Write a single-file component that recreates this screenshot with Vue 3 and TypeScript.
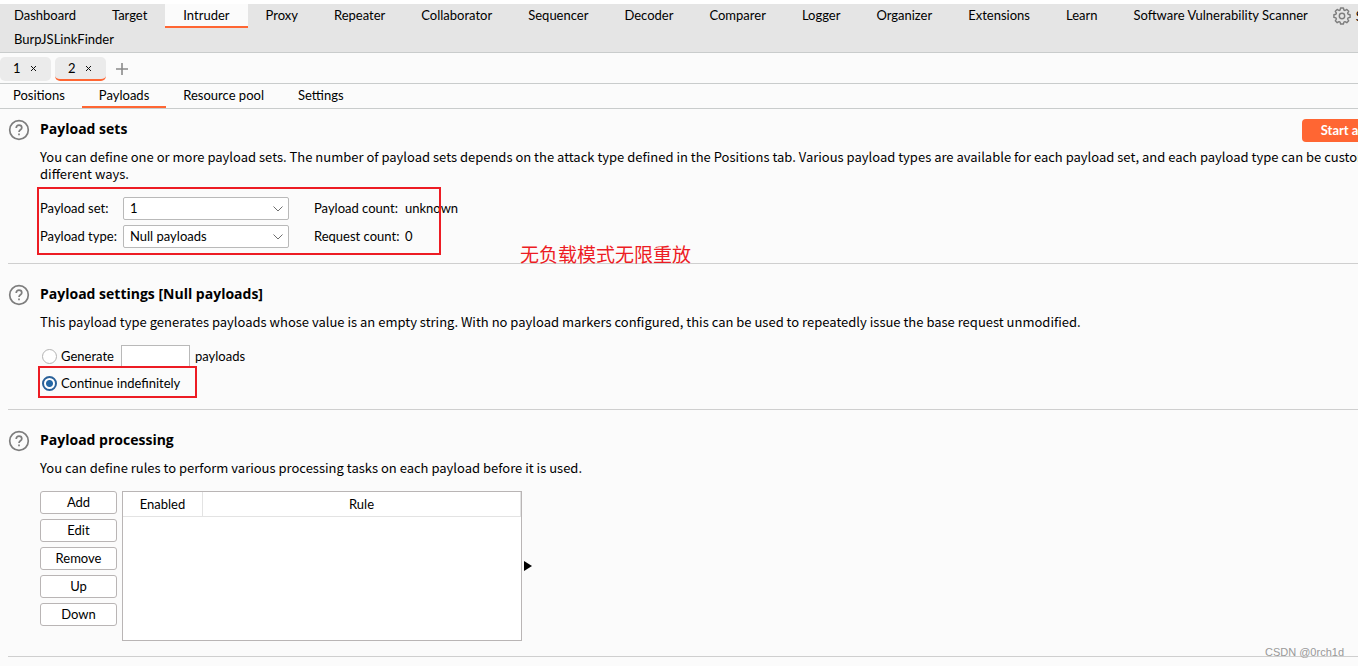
<script setup lang="ts">
import { ref } from 'vue'

const mainTabs: string[] = [
  'Dashboard', 'Target', 'Intruder', 'Proxy', 'Repeater', 'Collaborator', 'Sequencer',
  'Decoder', 'Comparer', 'Logger', 'Organizer', 'Extensions', 'Learn',
  'Software Vulnerability Scanner',
]
const attackTabs: number[] = [1, 2]
const views: string[] = ['Positions', 'Payloads', 'Resource pool', 'Settings']
const ruleActions: string[] = ['Add', 'Edit', 'Remove', 'Up', 'Down']

const activeMain = ref('Intruder')
const activeAttack = ref(2)
const activeView = ref('Payloads')
const payloadSet = ref('1')
const payloadType = ref('Null payloads')
const mode = ref('continue')
const amount = ref('')
</script>

<template>
  <div class="app">
    <header class="main-bar">
      <nav class="main-row">
        <button
          v-for="tab in mainTabs"
          :key="tab"
          type="button"
          class="main-tab"
          :class="{ active: tab === activeMain }"
          @click="activeMain = tab"
        >{{ tab }}</button>
        <button type="button" class="settings">
          <svg width="18" height="18" viewBox="0 0 18 18" fill="none" stroke="#7d7d7d" stroke-width="1.4" stroke-linejoin="round" aria-hidden="true">
            <path d="M7.6 1h2.8l.5 2 1.1.5 1.8-1.1 1.9 1.9-1.1 1.8.5 1.1 2 .5v2.700l-2 .5-.5 1.100 1.100 1.800-1.900 1.900-1.800-1.100-1.100.5-.5 1.900H7.600l-.5-1.900-1.100-.5-1.800 1.100-1.900-1.900L3.400 12l-.5-1.100-2-.5V7.700l2-.5.5-1.100-1.100-1.800 1.900-1.900L6 3.500 7.100 3z" />
            <circle cx="9" cy="9" r="2.700" />
          </svg>
          <span>Settings</span>
        </button>
      </nav>
      <nav class="main-row">
        <button type="button" class="main-tab">BurpJSLinkFinder</button>
      </nav>
    </header>

    <nav class="attack-bar">
      <div
        v-for="n in attackTabs"
        :key="n"
        class="attack-tab"
        :class="{ active: n === activeAttack }"
      >
        <button type="button" @click="activeAttack = n">{{ n }}</button>
        <button type="button" class="close" :aria-label="`Close tab ${n}`">
          <svg width="5" height="5" viewBox="0 0 5 5" stroke="#111" stroke-width="1" aria-hidden="true"><path d="M0 0l5 5M5 0L0 5" /></svg>
        </button>
      </div>
      <button type="button" class="new-tab" aria-label="New tab">
        <svg width="12" height="12" viewBox="0 0 12 12" stroke="#8a8a8a" stroke-width="1.600" aria-hidden="true"><path d="M6 0v12M0 6h12" /></svg>
      </button>
    </nav>

    <nav class="view-bar">
      <button
        v-for="view in views"
        :key="view"
        type="button"
        class="view-tab"
        :class="{ active: view === activeView }"
        @click="activeView = view"
      >{{ view }}</button>
    </nav>

    <main class="content">
      <section class="panel">
        <button type="button" class="help" aria-label="Help">
          <svg width="22" height="22" viewBox="0 0 22 22" fill="none" stroke="#7d7d7d" stroke-width="1.700" aria-hidden="true"><circle cx="11" cy="11" r="9.300" /><path d="M8.200 8.900c0-1.700 1.200-2.700 2.800-2.700s2.800 1 2.800 2.500c0 2-2.800 2.100-2.800 4.200M11 14.600v1.600" /></svg>
        </button>
        <div class="body">
          <div class="title-row">
            <h2>Payload sets</h2>
            <button type="button" class="start">Start attack</button>
          </div>
          <p>You can define one or more payload sets. The number of payload sets depends on the attack type defined in the Positions tab. Various payload types are available for each payload set, and each payload type can be customized in<br>different ways.</p>
          <div class="set-grid">
            <label for="set">Payload set:</label>
            <div class="combo">
              <select id="set" v-model="payloadSet"><option>1</option></select>
              <svg width="10" height="6" viewBox="0 0 10 6" fill="none" stroke="#6e6e6e" aria-hidden="true"><path d="M.5.500L5 5 9.500.500" /></svg>
            </div>
            <span class="count">Payload count:</span><span>unknown</span>
            <label for="type">Payload type:</label>
            <div class="combo">
              <select id="type" v-model="payloadType"><option>Null payloads</option></select>
              <svg width="10" height="6" viewBox="0 0 10 6" fill="none" stroke="#6e6e6e" aria-hidden="true"><path d="M.5.500L5 5 9.500.500" /></svg>
            </div>
            <span class="count">Request count:</span><span>0</span>
            <div class="mark mark-sets"></div>
            <div class="note">无负载模式无限重放</div>
          </div>
        </div>
      </section>

      <section class="panel">
        <button type="button" class="help" aria-label="Help">
          <svg width="22" height="22" viewBox="0 0 22 22" fill="none" stroke="#7d7d7d" stroke-width="1.700" aria-hidden="true"><circle cx="11" cy="11" r="9.300" /><path d="M8.200 8.900c0-1.700 1.200-2.700 2.800-2.700s2.800 1 2.800 2.500c0 2-2.800 2.100-2.800 4.200M11 14.600v1.600" /></svg>
        </button>
        <div class="body">
          <h2>Payload settings [Null payloads]</h2>
          <p>This payload type generates payloads whose value is an empty string. With no payload markers configured, this can be used to repeatedly issue the base request unmodified.</p>
          <div class="options">
            <div class="option">
              <input id="generate" v-model="mode" type="radio" name="mode" value="generate">
              <label for="generate" class="generate">Generate</label>
              <input id="amount" v-model="amount" type="text" class="amount">
              <label for="amount">payloads</label>
            </div>
            <div class="option last">
              <input id="continue" v-model="mode" type="radio" name="mode" value="continue">
              <label for="continue">Continue indefinitely</label>
              <div class="mark mark-continue"></div>
            </div>
          </div>
        </div>
      </section>

      <section class="panel">
        <button type="button" class="help" aria-label="Help">
          <svg width="22" height="22" viewBox="0 0 22 22" fill="none" stroke="#7d7d7d" stroke-width="1.700" aria-hidden="true"><circle cx="11" cy="11" r="9.300" /><path d="M8.200 8.900c0-1.700 1.200-2.700 2.800-2.700s2.800 1 2.800 2.500c0 2-2.800 2.100-2.800 4.200M11 14.600v1.600" /></svg>
        </button>
        <div class="body">
          <h2>Payload processing</h2>
          <p>You can define rules to perform various processing tasks on each payload before it is used.</p>
          <div class="rules">
            <div class="actions">
              <button v-for="action in ruleActions" :key="action" type="button">{{ action }}</button>
            </div>
            <div class="table-box">
              <table>
                <thead><tr><th class="enabled" scope="col">Enabled</th><th scope="col">Rule</th></tr></thead>
              </table>
            </div>
            <svg class="handle" width="8" height="10" viewBox="0 0 8 10" aria-hidden="true"><path d="M0 0l8 5-8 5z" /></svg>
          </div>
        </div>
      </section>
    </main>

    <div class="watermark">CSDN @0rch1d</div>
  </div>
</template>

<style>
body {
  background: #fff;
}
</style>

<style scoped>
.app {
  position: relative;
  overflow: hidden;
  min-height: calc(100vh - 4px);
  margin-top: 4px;
  background: #fbfbfb;
  color: #000;
  font: 13px/17px Lato, "Open Sans", sans-serif;
  white-space: nowrap;
}
* {
  box-sizing: border-box;
}
button, input, select {
  font: inherit;
  color: inherit;
  margin: 0;
}
button {
  padding: 0;
  border: 0;
  background: none;
}
.main-bar {
  background: #e5e5e5;
  border-bottom: 1px solid #c9cccc;
}
.main-row {
  display: flex;
  height: 24px;
}
.main-tab {
  flex: none;
  padding: 0 18px;
  border-bottom: 2px solid transparent;
}
.main-tab:first-child {
  padding-left: 14px;
}
.main-tab.active {
  background: #fbfbfb;
  border-color: #ff6633;
}
.settings {
  flex: none;
  display: flex;
  align-items: center;
  gap: 5px;
  margin-left: 7px;
}
.attack-bar {
  display: flex;
  align-items: center;
  gap: 4px;
  height: 31px;
  padding-top: 2px;
  border-bottom: 1px solid #c9cccc;
}
.attack-tab {
  display: flex;
  align-items: center;
  gap: 10px;
  width: 51px;
  height: 24px;
  padding-left: 13px;
  border-radius: 5px;
  border-bottom: 2px solid transparent;
  background: #ebebeb;
}
.attack-tab.active {
  border-color: #ff6633;
}
.close, .new-tab {
  display: flex;
}
.new-tab {
  margin-left: 6px;
}
.view-bar {
  display: flex;
  height: 25px;
  border-bottom: 1px solid #c9cccc;
}
.view-tab {
  padding: 0 17px;
  border-bottom: 2px solid transparent;
}
.view-tab:first-child {
  padding-left: 13px;
}
.view-tab.active {
  border-color: #ff6633;
}
.content {
  width: calc(100% + 48px);
  padding-left: 8px;
}
.panel {
  display: flex;
  align-items: flex-start;
  gap: 10px;
  padding: 20px 0 15px;
  border-bottom: 1px solid #cfcfcf;
}
.panel:first-child {
  padding-top: 10px;
}
.help {
  display: flex;
}
.body {
  flex: 1;
  min-width: 0;
}
.title-row {
  display: flex;
  justify-content: space-between;
  height: 20px;
}
h2 {
  margin: 0;
  font: 700 14px/20px "Open Sans", sans-serif;
}
.start {
  flex: none;
  width: 104px;
  height: 23px;
  border-radius: 4px;
  background: #ff6633;
  color: #fff;
  font-weight: 700;
}
p {
  margin: 9px 0 15px;
  font-family: "Noto Sans CJK SC", sans-serif;
}
.set-grid {
  position: relative;
  display: grid;
  grid-template-columns: 78px 166px 106px auto;
  justify-content: start;
  align-items: center;
  gap: 5px;
}
.count {
  padding-left: 20px;
}
.combo {
  display: grid;
  align-items: center;
}
.combo > * {
  grid-area: 1 / 1;
}
.combo svg {
  justify-self: end;
  margin-right: 6px;
  pointer-events: none;
}
select {
  appearance: none;
  height: 23px;
  padding: 0 6px;
  border: 1px solid #b9b9b9;
  border-radius: 2px;
  background: #fff;
}
.mark {
  position: absolute;
  border: 2px solid #ed1c24;
  pointer-events: none;
}
.mark-sets {
  left: -3px;
  top: -10px;
  width: 404px;
  height: 68px;
}
.note {
  position: absolute;
  left: 480px;
  top: 43px;
  color: #ed1c24;
  font: 19px/28px "Noto Sans CJK SC", sans-serif;
}
.options {
  display: grid;
  gap: 5px;
}
.option {
  position: relative;
  display: flex;
  align-items: center;
  height: 23px;
}
.option.last {
  height: 21px;
}
input[type="radio"] {
  appearance: none;
  width: 15px;
  height: 15px;
  margin: 0 4px 0 2px;
  border: 1px solid #b3b3b3;
  border-radius: 50%;
  background: #fff;
}
input[type="radio"]:checked {
  border: 2px solid #2a6199;
  background: radial-gradient(circle, #2467a5 3px, #fff 4px);
}
.generate {
  width: 60px;
}
.amount {
  width: 69px;
  height: 23px;
  margin-right: 5px;
  padding: 0 4px;
  border: 1px solid #b9b9b9;
  background: #fff;
}
.mark-continue {
  left: -2px;
  top: -7px;
  width: 159px;
  height: 32px;
}
.rules {
  display: flex;
}
.actions {
  display: flex;
  flex-direction: column;
  gap: 5px;
  width: 77px;
  margin-right: 5px;
}
.actions button {
  height: 23px;
  border: 1px solid #b9b5b5;
  border-radius: 3px;
  background: #fff;
}
.table-box {
  width: 400px;
  height: 150px;
  border: 1px solid #b9b5b5;
  background: #fff;
}
table {
  width: 100%;
  border-collapse: separate;
  border-spacing: 0;
}
th {
  height: 25px;
  padding: 0;
  border-right: 1px solid #e3e3e3;
  border-bottom: 1px solid #e3e3e3;
  font-weight: 400;
}
.enabled {
  width: 80px;
}
.handle {
  align-self: center;
  margin-left: 2px;
}
.watermark {
  position: absolute;
  right: 14px;
  bottom: 6px;
  color: #999;
  font: 11px/16px "Liberation Sans", Arial, sans-serif;
}
</style>
